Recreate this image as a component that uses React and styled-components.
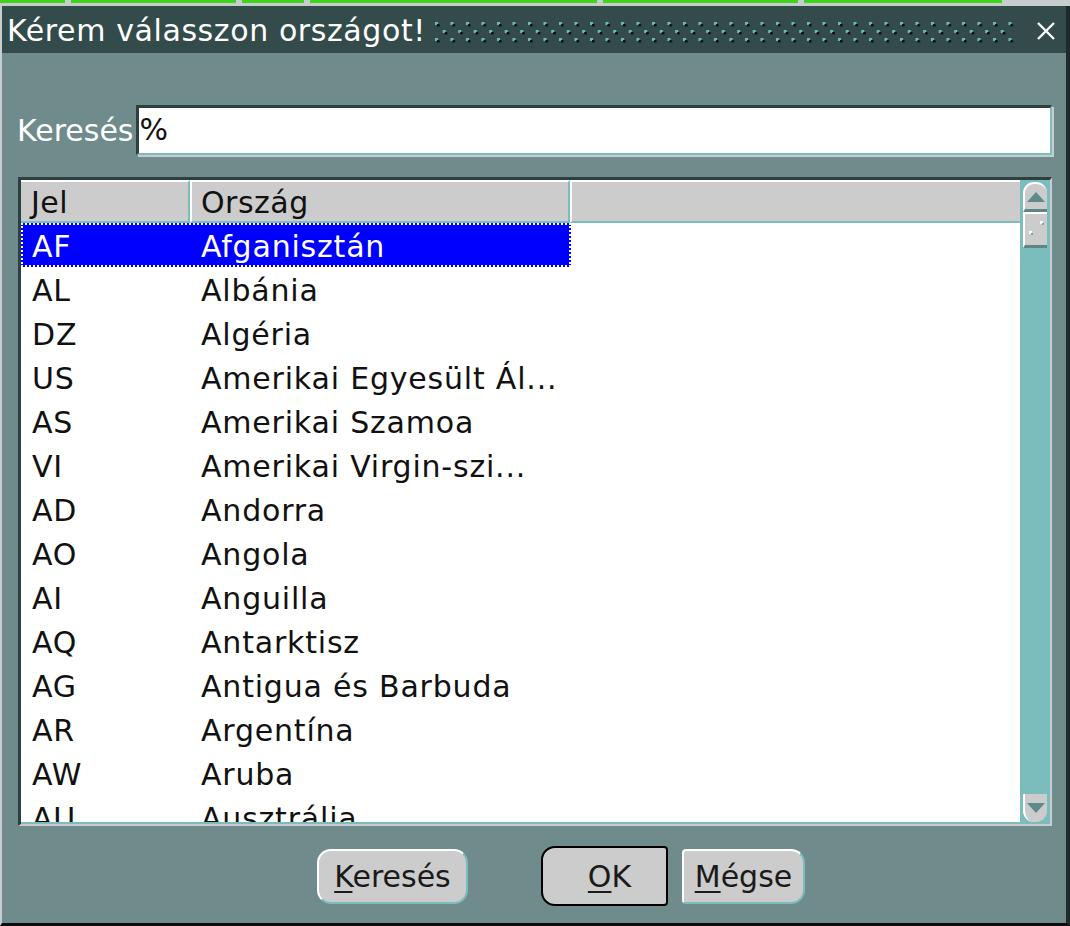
import React from 'react';
import styled, { createGlobalStyle } from 'styled-components';

const GlobalStyle = createGlobalStyle`
  html, body {
    margin: 0;
    padding: 0;
    background: #6f8b8b;
  }
  body {
    font-family: "DejaVu Sans", "Liberation Sans", sans-serif;
  }
`;

const Screen = styled.div`
  width: 1070px;
  height: 926px;
  display: flex;
  flex-direction: column;
  overflow: hidden;
`;

const TopStrip = styled.div`
  height: 6px;
  flex: none;
  display: flex;
  align-items: flex-start;
  gap: 6px;
  background: #c6cdcd;
`;

const GreenSeg = styled.div`
  width: ${p => p.w}px;
  height: 3px;
  background: #3fd41a;
`;

const Frame = styled.div`
  flex: 1;
  display: flex;
  flex-direction: column;
  border-left: 2px solid #c6cdcd;
  border-right: 4px solid #1f2b2b;
  border-bottom: 3px solid #0d0d0d;
  background: #6f8b8b;
  min-height: 0;
`;

const TitleBar = styled.div`
  height: 47px;
  flex: none;
  display: flex;
  align-items: center;
  padding: 2px 8px 0 5px;
  box-sizing: border-box;
  background: #344b4b;
`;

const Title = styled.div`
  color: #fff;
  font-size: 30px;
  white-space: nowrap;
  letter-spacing: 0.6px;
`;

const Grip = styled.svg`
  flex: 1;
  height: 24px;
  margin: 0 18px 0 8px;
`;

const CloseIcon = styled.svg`
  width: 24px;
  height: 24px;
  flex: none;
`;

const Content = styled.div`
  flex: 1;
  display: flex;
  flex-direction: column;
  padding: 52px 14px 0 15px;
  min-height: 0;
`;

const SearchRow = styled.div`
  display: flex;
  align-items: center;
  height: 50px;
`;

const Label = styled.label`
  color: #fff;
  font-size: 30px;
  margin-right: 3px;
  white-space: nowrap;
`;

const SearchField = styled.div`
  flex: 1;
  height: 50px;
  box-sizing: border-box;
  background: #fff;
  border-top: 3px solid #2e3f3f;
  border-left: 3px solid #2e3f3f;
  border-right: 2px solid #7bbcbc;
  border-bottom: 2px solid #7bbcbc;
  box-shadow: 2px 2px 0 #c8cccc;
  font-size: 30px;
  line-height: 44px;
  color: #111;
`;

const ListFrame = styled.div`
  margin: 22px 0 0 1px;
  height: 649px;
  box-sizing: border-box;
  display: flex;
  background: #fff;
  border-top: 3px solid #2e3f3f;
  border-left: 3px solid #2e3f3f;
  border-right: 2px solid #c8cccc;
  border-bottom: 2px solid #c8cccc;
  overflow: hidden;
`;

const Table = styled.div`
  flex: 1;
  display: flex;
  flex-direction: column;
  overflow: hidden;
  border-bottom: 2px solid #7bbcbc;
`;

const HeaderRow = styled.div`
  height: 43px;
  flex: none;
  display: flex;
  background: #cccccc;
`;

const HeaderCell = styled.div`
  box-sizing: border-box;
  width: ${p => (p.w ? `${p.w}px` : 'auto')};
  flex: ${p => (p.w ? 'none' : 1)};
  border-top: 2px solid #fff;
  border-left: ${p => (p.first ? 0 : 2)}px solid #fff;
  border-right: ${p => (p.last ? 0 : 2)}px solid #7bbcbc;
  border-bottom: 2px solid #7bbcbc;
  padding: 2px 0 0 ${p => p.pad}px;
  font-size: 30px;
  line-height: 37px;
  letter-spacing: 0.5px;
  color: #111;
  white-space: nowrap;
`;

const Row = styled.div`
  height: 44px;
  flex: none;
  display: flex;
`;

const RowBody = styled.div`
  display: flex;
  width: 550px;
  box-sizing: border-box;
  background: ${p => (p.selected ? '#0000ff' : 'transparent')};
  color: ${p => (p.selected ? '#fff' : '#111')};
  outline: ${p => (p.selected ? '2px dotted #fff' : 'none')};
  outline-offset: -2px;
`;

const Cell = styled.div`
  width: ${p => p.w}px;
  flex: none;
  box-sizing: border-box;
  padding: 3px 0 0 ${p => p.pad}px;
  font-size: 30px;
  line-height: 41px;
  letter-spacing: 0.8px;
  white-space: nowrap;
`;

const ScrollBar = styled.div`
  width: 30px;
  flex: none;
  display: flex;
  flex-direction: column;
  background: #7bbcbc;
  padding: 2px 3px 2px 3px;
  box-sizing: border-box;
`;

const ScrollBtn = styled.div`
  height: ${p => p.h}px;
  box-sizing: border-box;
  background: #cccccc;
  display: flex;
  align-items: center;
  justify-content: center;
  border-left: 2px solid #fff;
  border-top: ${p => (p.down ? 0 : 2)}px solid #fff;
  border-bottom: ${p => (p.down ? 0 : 3)}px solid #5f8585;
  border-radius: ${p => (p.down ? '0 0 11px 11px' : p.up ? '11px 11px 0 0' : '0')};
  margin-top: ${p => (p.down ? 'auto' : '0')};
`;

const Buttons = styled.div`
  display: flex;
  align-items: center;
  height: 60px;
  margin-top: 20px;
  padding-left: 300px;
`;

const Button = styled.div`
  width: ${p => p.w}px;
  height: ${p => (p.focus ? 60 : 55)}px;
  margin-left: ${p => p.gap || 0}px;
  box-sizing: border-box;
  background: #cccccc;
  display: flex;
  align-items: center;
  justify-content: center;
  font-size: 30px;
  color: #1a1a1a;
  border: ${p => (p.focus ? '2px solid #000' : '2px solid #fff')};
  border-right-color: ${p => (p.focus ? '#000' : '#7bbcbc')};
  border-bottom-color: ${p => (p.focus ? '#000' : '#7bbcbc')};
  border-radius: ${p => p.radius};
  padding-left: ${p => p.shift || 0}px;
`;

const Mnemonic = styled.span`
  text-decoration: underline;
  text-underline-offset: 4px;
  text-decoration-thickness: 2px;
`;

const countries = [
  ['AF', 'Afganisztán'],
  ['AL', 'Albánia'],
  ['DZ', 'Algéria'],
  ['US', 'Amerikai Egyesült Ál...'],
  ['AS', 'Amerikai Szamoa'],
  ['VI', 'Amerikai Virgin-szi...'],
  ['AD', 'Andorra'],
  ['AO', 'Angola'],
  ['AI', 'Anguilla'],
  ['AQ', 'Antarktisz'],
  ['AG', 'Antigua és Barbuda'],
  ['AR', 'Argentína'],
  ['AW', 'Aruba'],
  ['AU', 'Ausztrália'],
];

const segments = [65, 165, 62, 287, 195, 198];

function GripDots() {
  return (
    <Grip preserveAspectRatio="none">
      <defs>
        <pattern id="grip" width="15.5" height="16" patternUnits="userSpaceOnUse">
          <rect x="1" y="3" width="3" height="3" fill="#6cbcbc" />
          <rect x="3" y="5" width="2.5" height="2.5" fill="#0b0b0b" />
          <rect x="8.75" y="11" width="3" height="3" fill="#6cbcbc" />
          <rect x="10.75" y="13" width="2.5" height="2.5" fill="#0b0b0b" />
        </pattern>
      </defs>
      <rect x="0" y="0" width="100%" height="100%" fill="url(#grip)" />
    </Grip>
  );
}

export default function App() {
  return (
    <Screen>
      <GlobalStyle />
      <TopStrip>
        {segments.map((w, i) => (
          <GreenSeg key={i} w={w} />
        ))}
      </TopStrip>
      <Frame>
        <TitleBar>
          <Title>Kérem válasszon országot!</Title>
          <GripDots />
          <CloseIcon viewBox="0 0 24 24">
            <path d="M4 4 L20 20 M20 4 L4 20" stroke="#fff" strokeWidth="2.4" />
          </CloseIcon>
        </TitleBar>
        <Content>
          <SearchRow>
            <Label>Keresés</Label>
            <SearchField>%</SearchField>
          </SearchRow>
          <ListFrame>
            <Table>
              <HeaderRow>
                <HeaderCell w={169} pad={10} first>Jel</HeaderCell>
                <HeaderCell w={380} pad={9}>Ország</HeaderCell>
                <HeaderCell pad={0} last />
              </HeaderRow>
              {countries.map(([code, name], i) => (
                <Row key={code}>
                  <RowBody selected={i === 0}>
                    <Cell w={169} pad={11}>{code}</Cell>
                    <Cell w={380} pad={11}>{name}</Cell>
                  </RowBody>
                </Row>
              ))}
            </Table>
            <ScrollBar>
              <ScrollBtn h={30} up>
                <svg width="18" height="10" viewBox="0 0 18 10">
                  <polygon points="9,0 18,10 0,10" fill="#5f8a8a" />
                </svg>
              </ScrollBtn>
              <ScrollBtn h={36}>
                <svg width="22" height="30" viewBox="0 0 22 30">
                  <rect x="15" y="6" width="3" height="3" fill="#fff" />
                  <rect x="17" y="8" width="2" height="2" fill="#5fb0b0" />
                  <rect x="4" y="16" width="3" height="3" fill="#fff" />
                  <rect x="6" y="18" width="2" height="2" fill="#5fb0b0" />
                </svg>
              </ScrollBtn>
              <ScrollBtn h={28} down>
                <svg width="18" height="10" viewBox="0 0 18 10">
                  <polygon points="0,0 18,0 9,10" fill="#5f8a8a" />
                </svg>
              </ScrollBtn>
            </ScrollBar>
          </ListFrame>
          <Buttons>
            <Button w={151} radius="14px">
              <span><Mnemonic>K</Mnemonic>eresés</span>
            </Button>
            <Button w={127} gap={73} focus shift={10} radius="14px 4px 4px 14px">
              <span><Mnemonic>O</Mnemonic>K</span>
            </Button>
            <Button w={123} gap={14} radius="4px 14px 14px 4px">
              <span><Mnemonic>M</Mnemonic>égse</span>
            </Button>
          </Buttons>
        </Content>
      </Frame>
    </Screen>
  );
}
